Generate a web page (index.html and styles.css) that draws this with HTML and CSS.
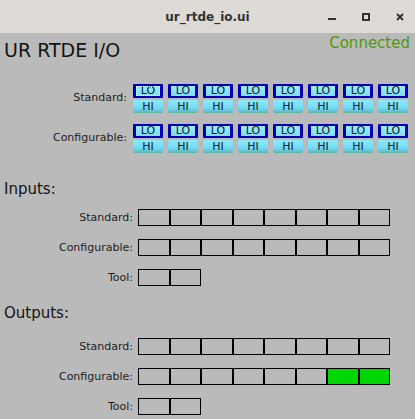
FILE: index.html
```html
<!DOCTYPE html>
<html>
<head>
<meta charset="utf-8">
<link rel="stylesheet" href="styles.css">
</head>
<body>
<div class="titlebar">
  <div></div>
  <div class="wintitle">ur_rtde_io.ui</div>
  <div class="controls">
    <svg class="ctl" width="8" height="8" viewBox="0 0 8 8"><rect x="0" y="5" width="8" height="2" fill="#2e3436"/></svg>
    <svg class="ctl" width="8" height="8" viewBox="0 0 8 8"><rect x="1" y="1" width="6" height="6" fill="none" stroke="#2e3436" stroke-width="2"/></svg>
    <svg class="ctl" width="8" height="8" viewBox="0 0 8 8"><path d="M1 1 L7 7 M7 1 L1 7" stroke="#2e3436" stroke-width="2"/></svg>
  </div>
</div>
<div class="main">
  <div class="header">
    <div class="apptitle">UR RTDE I/O</div>
    <div class="status">Connected</div>
  </div>

  <div class="btnrow first">
    <div class="blabel">Standard:</div>
    <div class="btngrid">
      <div class="pair"><div class="lo focus"><span>LO</span></div><div class="hi">HI</div></div>
      <div class="pair"><div class="lo"><span>LO</span></div><div class="hi">HI</div></div>
      <div class="pair"><div class="lo"><span>LO</span></div><div class="hi">HI</div></div>
      <div class="pair"><div class="lo"><span>LO</span></div><div class="hi">HI</div></div>
      <div class="pair"><div class="lo"><span>LO</span></div><div class="hi">HI</div></div>
      <div class="pair"><div class="lo"><span>LO</span></div><div class="hi">HI</div></div>
      <div class="pair"><div class="lo"><span>LO</span></div><div class="hi">HI</div></div>
      <div class="pair"><div class="lo"><span>LO</span></div><div class="hi">HI</div></div>
    </div>
  </div>
  <div class="btnrow second">
    <div class="blabel">Configurable:</div>
    <div class="btngrid">
      <div class="pair"><div class="lo"><span>LO</span></div><div class="hi">HI</div></div>
      <div class="pair"><div class="lo"><span>LO</span></div><div class="hi">HI</div></div>
      <div class="pair"><div class="lo"><span>LO</span></div><div class="hi">HI</div></div>
      <div class="pair"><div class="lo"><span>LO</span></div><div class="hi">HI</div></div>
      <div class="pair"><div class="lo"><span>LO</span></div><div class="hi">HI</div></div>
      <div class="pair"><div class="lo"><span>LO</span></div><div class="hi">HI</div></div>
      <div class="pair"><div class="lo"><span>LO</span></div><div class="hi">HI</div></div>
      <div class="pair"><div class="lo"><span>LO</span></div><div class="hi">HI</div></div>
    </div>
  </div>

  <div class="section inputs">Inputs:</div>
  <div class="rows in-rows">
    <div class="iorow">
      <div class="ilabel">Standard:</div>
      <div class="boxes"><div class="box"></div><div class="box"></div><div class="box"></div><div class="box"></div><div class="box"></div><div class="box"></div><div class="box"></div><div class="box"></div></div>
    </div>
    <div class="iorow">
      <div class="ilabel">Configurable:</div>
      <div class="boxes"><div class="box"></div><div class="box"></div><div class="box"></div><div class="box"></div><div class="box"></div><div class="box"></div><div class="box"></div><div class="box"></div></div>
    </div>
    <div class="iorow">
      <div class="ilabel">Tool:</div>
      <div class="boxes"><div class="box"></div><div class="box"></div></div>
    </div>
  </div>

  <div class="section outputs">Outputs:</div>
  <div class="rows out-rows">
    <div class="iorow">
      <div class="ilabel">Standard:</div>
      <div class="boxes"><div class="box"></div><div class="box"></div><div class="box"></div><div class="box"></div><div class="box"></div><div class="box"></div><div class="box"></div><div class="box"></div></div>
    </div>
    <div class="iorow">
      <div class="ilabel">Configurable:</div>
      <div class="boxes"><div class="box"></div><div class="box"></div><div class="box"></div><div class="box"></div><div class="box"></div><div class="box"></div><div class="box on"></div><div class="box on"></div></div>
    </div>
    <div class="iorow">
      <div class="ilabel">Tool:</div>
      <div class="boxes"><div class="box"></div><div class="box"></div></div>
    </div>
  </div>
</div>
</body>
</html>
```
FILE: styles.css
```css
* { box-sizing: border-box; }
html, body { margin: 0; padding: 0; }
body {
  background: #bababa;
  font-family: "DejaVu Sans", sans-serif;
  color: #1e1e1e;
  width: 415px;
  height: 419px;
  overflow: hidden;
}
.titlebar {
  height: 33px;
  background: #dedbd7;
  display: grid;
  grid-template-columns: 1fr auto 1fr;
  align-items: center;
}
.wintitle {
  font-weight: bold;
  font-size: 12px;
  color: #2e3436;
  line-height: 14px;
}
.controls {
  display: flex;
  justify-content: flex-end;
  align-items: center;
  gap: 26px;
  padding-right: 11px;
}
.ctl { display: block; }
.main { padding: 0 4px; }
.header {
  display: flex;
  justify-content: space-between;
  align-items: flex-start;
  padding-top: 1px;
  height: 28px;
}
.apptitle {
  font-size: 19px;
  line-height: 22px;
  margin-top: 5px;
  color: #141414;
}
.status {
  font-size: 15px;
  line-height: 18px;
  color: #4e9a06;
  margin-right: 1px;
}
.btnrow {
  display: flex;
  align-items: center;
}
.btnrow.first { margin-top: 23px; }
.btnrow.second { margin-top: 11px; }
.blabel {
  width: 123px;
  margin-right: 6px;
  margin-bottom: 3px;
  text-align: right;
  font-size: 11px;
  line-height: 13px;
}
.btngrid {
  display: flex;
  gap: 5px;
}
.pair {
  display: flex;
  flex-direction: column;
  gap: 2px;
  width: 30px;
}
.lo {
  height: 14px;
  border: 2px solid #0000b0;
  border-left-width: 3px;
  border-right-width: 3px;
  border-radius: 1px;
  background: linear-gradient(#9aecfc, #7fdcf4);
  font-size: 11px;
  line-height: 10px;
  text-align: center;
  color: #0b1a26;
}
.lo span { display: block; height: 10px; }
.lo.focus span { outline: 1px dotted #ffffff; outline-offset: -1px; }
.hi {
  height: 13px;
  border-radius: 2px;
  background: linear-gradient(#8aeaff 0%, #76dcf6 55%, #6cc8e0 80%, #5fb08e 100%);
  font-size: 11px;
  line-height: 13px;
  text-align: center;
  color: #0b1a26;
}
.section {
  font-size: 15px;
  line-height: 18px;
  color: #141414;
}
.section.inputs { margin-top: 27px; }
.section.outputs { margin-top: 18px; }
.rows {
  display: flex;
  flex-direction: column;
  gap: 13px;
}
.in-rows { margin-top: 11px; }
.out-rows { margin-top: 16px; }
.iorow {
  display: flex;
  align-items: center;
  height: 17px;
}
.ilabel {
  width: 129px;
  margin-right: 5px;
  text-align: right;
  font-size: 11px;
  line-height: 13px;
}
.boxes { display: flex; }
.box {
  width: 31.5px;
  height: 17px;
  border: 1px solid #000;
  background: #bababa;
}
.box.on { background: #00d600; }
```
